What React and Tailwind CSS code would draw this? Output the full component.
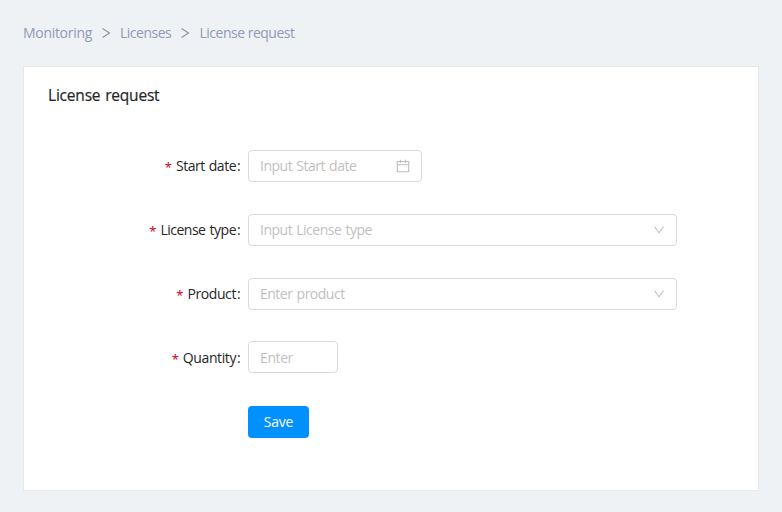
import React from "react";

function Field({ label, labelClass, children }) {
  return (
    <div className="flex h-8 items-center">
      <div className="flex w-[224px] shrink-0 items-center justify-end pr-[8px] text-[#262626]">
        <span className="mr-[4px] pt-px font-['Noto_Sans'] text-[13px] text-[#d0021b]">*</span>
        <span className={labelClass}>{label}</span>
        <span className="ml-px w-[3px]">:</span>
      </div>
      {children}
    </div>
  );
}

function DownIcon() {
  return (
    <svg width="12" height="12" viewBox="64 64 896 896" fill="#bfbfbf">
      <path d="M884 256h-75c-5.100 0-9.900 2.500-12.900 6.600L512 654.200 227.900 262.600c-3-4.100-7.800-6.600-12.900-6.600h-75c-6.500 0-10.300 7.400-6.500 12.700l352.600 486.100c12.800 17.600 39 17.600 51.700 0l352.600-486.100c3.900-5.300.1-12.700-6.400-12.700z" />
    </svg>
  );
}

function CalendarIcon() {
  return (
    <svg width="14" height="14" viewBox="64 64 896 896" fill="#bfbfbf">
      <path d="M880 184H712v-64c0-4.400-3.600-8-8-8h-56c-4.400 0-8 3.600-8 8v64H384v-64c0-4.400-3.600-8-8-8h-56c-4.400 0-8 3.600-8 8v64H144c-17.700 0-32 14.300-32 32v664c0 17.700 14.300 32 32 32h736c17.700 0 32-14.300 32-32V216c0-17.700-14.300-32-32-32zm-40 656H184V460h656v380zM184 392V256h128v48c0 4.400 3.600 8 8 8h56c4.400 0 8-3.600 8-8v-48h256v48c0 4.400 3.600 8 8 8h56c4.400 0 8-3.600 8-8v-48h128v136H184z" />
    </svg>
  );
}

function Separator() {
  return (
    <svg className="mx-[9px] mt-0.5 shrink-0" width="10" height="12" viewBox="0 0 10 12" fill="none" stroke="#8f96a3" strokeWidth="1.2">
      <path d="M1.500 1.500 8.500 6l-7 4.500" />
    </svg>
  );
}

const box = "flex h-8 items-center justify-between rounded-[4px] border border-[#d9d9d9] bg-white pl-[11px] text-[#bfbfbf]";

export default function App() {
  return (
    <div className="h-[512px] w-[782px] overflow-hidden bg-[#eef2f5] px-[23px] pt-[22px] font-['Open_Sans',sans-serif] text-[14px] leading-5 whitespace-nowrap">
      <nav className="flex h-5 items-center text-[#9299b8]">
        <span className="w-[69px] pt-px tracking-[-0.3px]">Monitoring</span>
        <Separator />
        <span className="w-[51px] pt-px tracking-[-0.5px]">Licenses</span>
        <Separator />
        <span className="ml-[0.500px] pt-px tracking-[-0.5px]">License request</span>
      </nav>
      <main className="mt-6 h-[425px] w-[736px] border border-[#e4e8eb] bg-white">
        <h1 className="pt-[16px] pl-6 text-[15.500px] leading-6 font-medium tracking-[-0.2px] text-[#262626] [-webkit-text-stroke:0.2px_#262626] [word-spacing:1px]">License request</h1>
        <form className="mt-[43px] flex flex-col gap-8">
          <Field label="Start date" labelClass="tracking-[-0.5px] [word-spacing:1px]">
            <div className={`${box} w-[174px] pr-[11px]`}>
              <span className="tracking-[-0.5px] [word-spacing:1px]">Input Start date</span>
              <CalendarIcon />
            </div>
          </Field>
          <Field label="License type" labelClass="tracking-[-0.5px] [word-spacing:1px]">
            <div className={`${box} w-[429px] pr-[11px]`}>
              <span className="tracking-[-0.5px] [word-spacing:1px]">Input License type</span>
              <DownIcon />
            </div>
          </Field>
          <Field label="Product" labelClass="tracking-[-0.4px]">
            <div className={`${box} w-[429px] pr-[11px]`}>
              <span className="tracking-[-0.5px] [word-spacing:1px]">Enter product</span>
              <DownIcon />
            </div>
          </Field>
          <Field label="Quantity" labelClass="tracking-[-0.4px]">
            <div className={`${box} -mt-0.5 w-[90px]`}>
              <span className="pt-0.5 tracking-[-0.4px]">Enter</span>
            </div>
          </Field>
          <button type="button" className="ml-[224px] h-8 w-[61px] rounded-[4px] bg-[#0091ff] text-center tracking-[-0.2px] text-white">
            Save
          </button>
        </form>
      </main>
    </div>
  );
}
